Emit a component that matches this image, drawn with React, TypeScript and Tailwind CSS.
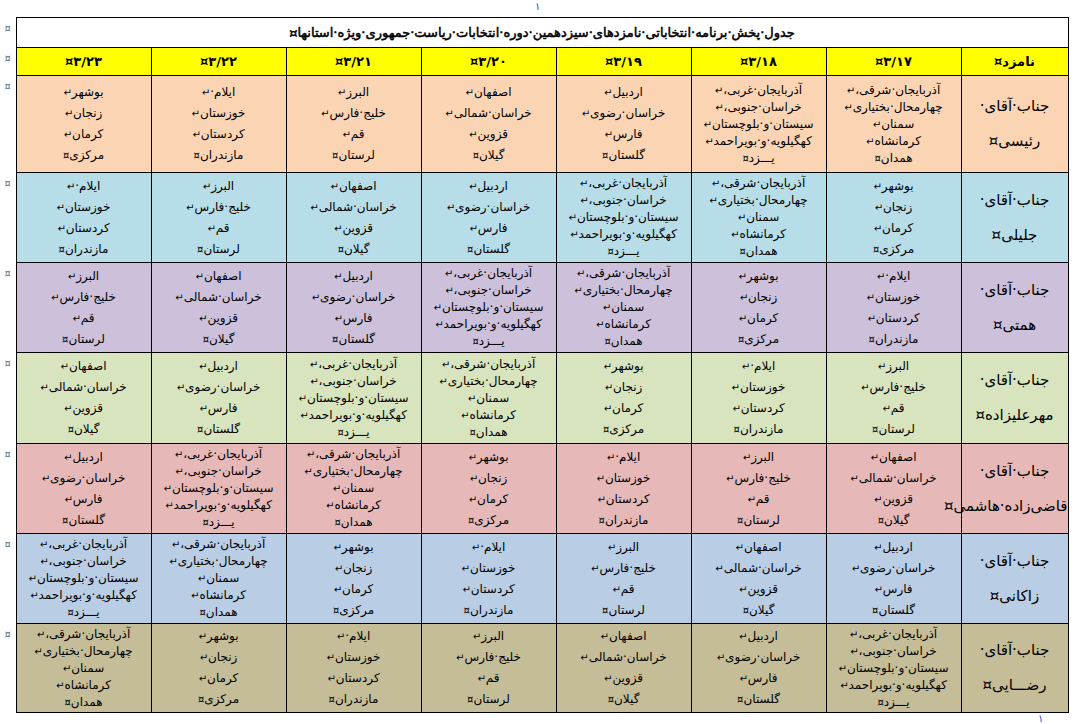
const groups: string[][] = [
  ["آذربایجان·شرقی،", "چهارمحال·بختیاری", "سمنان", "کرمانشاه", "همدان"],
  ["آذربایجان·غربی،", "خراسان·جنوبی،", "سیستان·و·بلوچستان", "کهگیلویه·و·بویراحمد", "یـــزد"],
  ["اردبیل", "خراسان·رضوی", "فارس", "گلستان"],
  ["اصفهان", "خراسان·شمالی", "قزوین", "گیلان"],
  ["البرز", "خلیج·فارس", "قم", "لرستان"],
  ["ایلام·", "خوزستان", "کردستان", "مازندران"],
  ["بوشهر", "زنجان", "کرمان", "مرکزی"],
];

const dates = ["۳/۱۷", "۳/۱۸", "۳/۱۹", "۳/۲۰", "۳/۲۱", "۳/۲۲", "۳/۲۳"];

const rows = [
  { name: "رئیسی", bg: "bg-[#fbd4b4]", h: "h-[97px]" },
  { name: "جلیلی", bg: "bg-[#b6dde8]", h: "h-[90px]" },
  { name: "همتی", bg: "bg-[#ccc0da]", h: "h-[90px]" },
  { name: "مهرعلیزاده", bg: "bg-[#d7e4bd]", h: "h-[91px]" },
  { name: "قاضی‌زاده·هاشمی", bg: "bg-[#e6b9b8]", h: "h-[90px]" },
  { name: "زاکانی", bg: "bg-[#b9cde5]", h: "h-[90px]" },
  { name: "رضـــایی", bg: "bg-[#c4bd97]", h: "h-[89px]" },
];

function Mark() {
  return <td className="border-0 bg-white p-0 align-top pt-[6px] text-center text-[10px] leading-none text-gray-500">¤</td>;
}

function Provinces({ list }: { list: string[] }) {
  const five = list.length > 4;
  return (
    <div className={five ? "text-[12px] leading-[17px]" : "text-[12px] leading-[21px]"}>
      {list.map((p, i) => (
        <div key={i} className="whitespace-nowrap">
          {p}
          <span className="text-[10px] leading-none">{i === list.length - 1 ? "¤" : "↵"}</span>
        </div>
      ))}
    </div>
  );
}

export default function App() {
  return (
    <div className="w-[1085px] h-[724px] bg-white text-black overflow-hidden" style={{ fontFamily: '"DejaVu Sans", sans-serif' }}>
      <div className="h-[17px] pl-[535px] text-[10px] leading-[14px] text-blue-700">۱</div>
      <table dir="rtl" className="border-collapse table-fixed w-[1068px]">
        <colgroup>
          <col className="w-[107px]" />
          {dates.map((d) => (
            <col key={d} className="w-[135px]" />
          ))}
          <col className="w-[16px]" />
        </colgroup>
        <tbody>
          <tr className="h-[30px]">
            <td colSpan={8} className="border border-black p-0 text-center text-[13px] leading-none [-webkit-text-stroke:0.5px_black]">
              جدول·پخش·برنامه·انتخاباتی·نامزدهای·سیزدهمین·دوره·انتخابات·ریاست·جمهوری·ویژه·استانها¤
            </td>
            <Mark />
          </tr>
          <tr className="h-[28px] bg-[#ffff00]">
            <td className="border border-black p-0 text-center text-[13px] font-bold">نامزد¤</td>
            {dates.map((d) => (
              <td key={d} className="border border-black p-0 text-center text-[13px] font-bold">
                <span dir="ltr">¤{d}</span>
              </td>
            ))}
            <Mark />
          </tr>
          {rows.map((r, ri) => (
            <tr key={r.name} className={r.h}>
              <td className={`${r.bg} border border-black p-0 text-center text-[15px] leading-[35px] whitespace-nowrap`}>
                <div>جناب·آقای·</div>
                <div>{r.name}¤</div>
              </td>
              {dates.map((d, ci) => (
                <td key={d} className={`${r.bg} border border-black p-0 text-center align-middle`}>
                  <Provinces list={groups[(ci - ri + 7) % 7]} />
                </td>
              ))}
              <Mark />
            </tr>
          ))}
        </tbody>
      </table>
      <div className="pl-[1038px] text-[10px] leading-[12px] text-blue-700">۱</div>
    </div>
  );
}
